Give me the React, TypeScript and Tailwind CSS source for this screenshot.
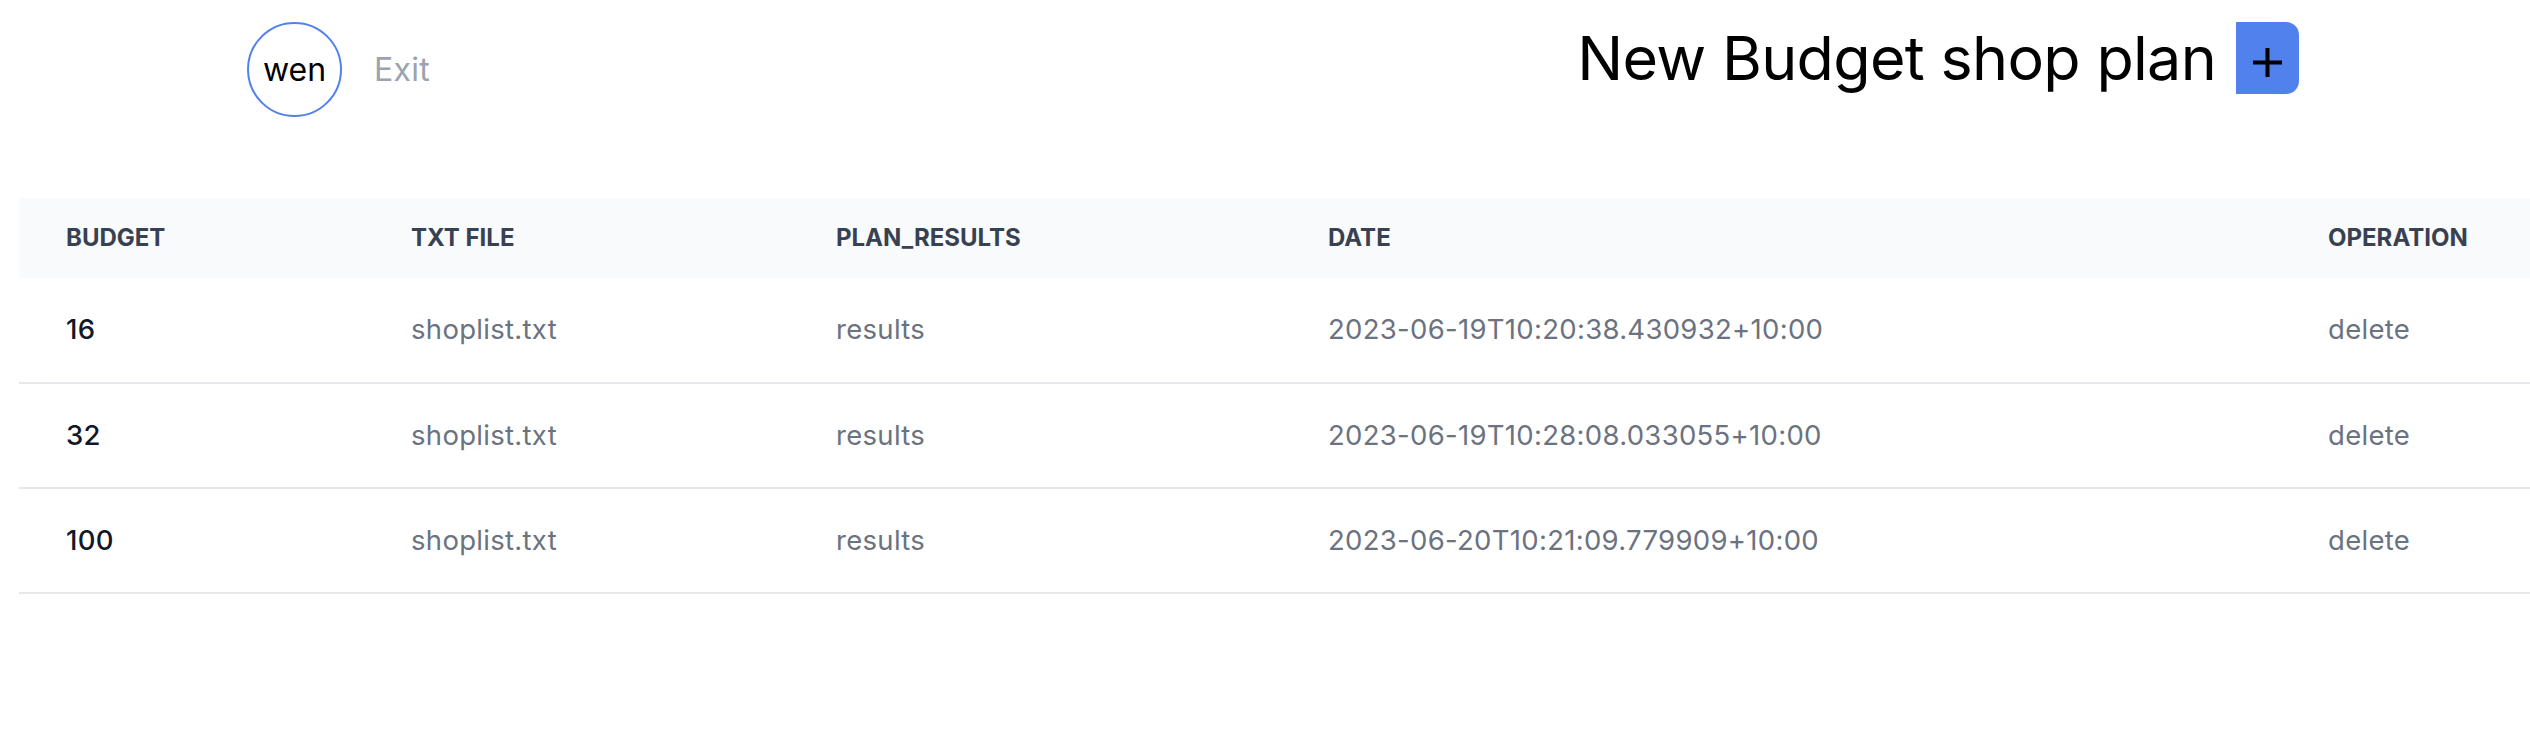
import React from 'react';

interface Plan {
  id: number;
  budget: number;
  file: string;
  date: string;
}

const plans: Plan[] = [
  { id: 1, budget: 16, file: 'shoplist.txt', date: '2023-06-19T10:20:38.430932+10:00' },
  { id: 2, budget: 32, file: 'shoplist.txt', date: '2023-06-19T10:28:08.033055+10:00' },
  { id: 3, budget: 100, file: 'shoplist.txt', date: '2023-06-20T10:21:09.779909+10:00' },
];

export default function App() {
  return (
    <div className="min-h-screen bg-white font-['Inter','Noto_Sans',sans-serif]">
      {/* Top bar */}
      <div className="flex justify-between items-start pt-[22px] pl-[247px] pr-[231px]">
        <div className="flex items-center gap-[32px]">
          <div className="w-[95px] h-[95px] rounded-full border-2 border-[#5081ec] flex items-center justify-center text-[32px] text-black">
            wen
          </div>
          <button className="text-[32px] text-[#9ca3af] tracking-[0.3px]">Exit</button>
        </div>

        <div className="flex items-center gap-[20px]">
          <h1 className="text-[61px] leading-[72px] font-normal tracking-[-0.7px] text-black">
            New Budget shop plan
          </h1>
          <button className="w-[63px] h-[72px] bg-[#5081ec] rounded-r-[13px] flex items-center justify-center">
            <svg className="mt-[9px]" width="29" height="29" viewBox="0 0 29 29" fill="none">
              <path d="M14.5 0v29M0 14.5h29" stroke="#000" strokeWidth={4} />
            </svg>
          </button>
        </div>
      </div>

      {/* Plans table */}
      <div className="mt-[81px] pl-[19px]">
        <table className="table-fixed w-[2511px] border-collapse">
          <colgroup>
            <col className="w-[345px]" />
            <col className="w-[425px]" />
            <col className="w-[492px]" />
            <col className="w-[1000px]" />
            <col />
          </colgroup>
          <thead className="bg-[#f9fafb]">
            <tr className="h-[80px]">
              <th className="pl-[47px] text-left text-[24px] font-bold uppercase text-[#374151]">Budget</th>
              <th className="pl-[47px] text-left text-[24px] font-bold uppercase text-[#374151]">txt file</th>
              <th className="pl-[47px] text-left text-[24px] font-bold uppercase text-[#374151]">plan_results</th>
              <th className="pl-[47px] text-left text-[24px] font-bold uppercase text-[#374151]">Date</th>
              <th className="pl-[47px] text-left text-[24px] font-bold uppercase text-[#374151]">Operation</th>
            </tr>
          </thead>
          <tbody className="text-[27.5px] tracking-[0.3px]">
            {plans.map((plan) => (
              <tr key={plan.id} className="h-[105px] border-b-2 border-[#e5e7eb]">
                <td className="pl-[47px] font-medium text-[#111827]">{plan.budget}</td>
                <td className="pl-[47px] text-[#6b7280]">{plan.file}</td>
                <td className="pl-[47px] text-[#6b7280]">results</td>
                <td className="pl-[47px] text-[#6b7280]">{plan.date}</td>
                <td className="pl-[47px] text-[#6b7280]">delete</td>
              </tr>
            ))}
          </tbody>
        </table>
      </div>
    </div>
  );
}
